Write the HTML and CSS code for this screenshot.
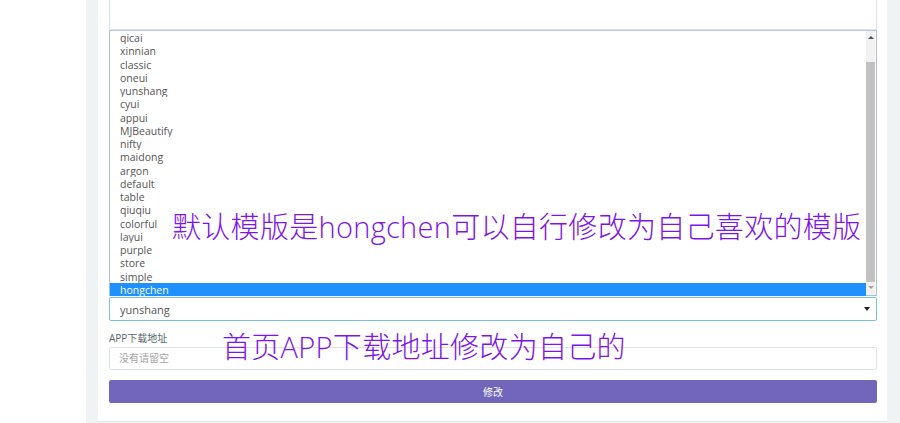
FILE: index.html
```html
<!DOCTYPE html>
<html lang="zh-CN">
<head>
    <meta charset="UTF-8">
    <meta name="viewport" content="width=device-width, initial-scale=1.0">
    <title>模版设置</title>
    <link rel="stylesheet" href="styles.css">
</head>
<body>
    <div class="app-content">
        <div class="panel">
            <div class="textarea"></div>

            <div class="listbox">
                <ul class="options">
                    <li>qicai</li>
                    <li>xinnian</li>
                    <li>classic</li>
                    <li>oneui</li>
                    <li>yunshang</li>
                    <li>cyui</li>
                    <li>appui</li>
                    <li>MJBeautify</li>
                    <li>nifty</li>
                    <li>maidong</li>
                    <li>argon</li>
                    <li>default</li>
                    <li>table</li>
                    <li>qiuqiu</li>
                    <li>colorful</li>
                    <li>layui</li>
                    <li>purple</li>
                    <li>store</li>
                    <li>simple</li>
                    <li class="selected">hongchen</li>
                </ul>
                <div class="scrollbar">
                    <span class="arrow up"></span>
                    <span class="thumb"></span>
                    <span class="arrow down"></span>
                </div>
            </div>

            <div class="select">
                <span>yunshang</span>
                <span class="caret"></span>
            </div>

            <label class="field-label">APP下载地址</label>
            <div class="input">没有请留空</div>

            <button class="btn-submit">修改</button>
        </div>
    </div>

    <!-- 标注文字 -->
    <div class="note note-template">默认模版是hongchen可以自行修改为自己喜欢的模版</div>
    <div class="note note-app">首页APP下载地址修改为自己的</div>
</body>
</html>
```

FILE: styles.css
```css
body {
    margin: 0;
    background: #fff;
    font-family: 'Open Sans', 'Noto Sans CJK SC', sans-serif;
    font-size: 11px;
    color: #58666e;
    height: 423px;
    overflow: hidden;
    position: relative;
}

.app-content {
    margin-left: 86px;
    background: #f0f3f4;
    padding: 0 13px 0 12px;
    height: 423px;
}

.panel {
    background: #fff;
    padding: 0 10px 0 11px;
    height: 421px;
    border-bottom: 1px solid #e4e8ea;
}

.textarea {
    height: 30px;
    border: 1px solid #dde2e6;
    border-top: none;
    box-sizing: border-box;
}

.listbox {
    display: flex;
    height: 266px;
    border: 1px solid #aebfdc;
    border-top-color: #b9c8e2;
    box-sizing: border-box;
    background: #fff;
}

.options {
    list-style: none;
    margin: 0;
    padding: 0;
    flex: 1;
}

.options li {
    height: 13.25px;
    line-height: 14.5px;
    padding-left: 10px;
    font-size: 10.5px;
    color: #555;
    white-space: nowrap;
    overflow: hidden;
}

.options li.selected {
    background: #1e90ff;
    color: #fff;
}

.scrollbar {
    width: 9px;
    margin-right: 1px;
    background: #f1f1f1;
    display: flex;
    flex-direction: column;
    align-items: center;
}

.arrow {
    height: 0;
    width: 0;
    border-left: 3px solid transparent;
    border-right: 3px solid transparent;
}

.arrow.up {
    margin: 5px 0 23px;
    border-bottom: 3px solid #505050;
}

.arrow.down {
    margin: 4px 0 0;
    border-top: 3px solid #a3a3a3;
}

.thumb {
    width: 9px;
    height: 220px;
    background: #c1c1c1;
}

.select {
    display: flex;
    align-items: center;
    justify-content: space-between;
    height: 24px;
    margin-top: 1px;
    padding: 0 6px 0 10px;
    border: 1px solid #75c2e6;
    border-radius: 2px;
    box-sizing: border-box;
    color: #555;
}

.caret {
    width: 0;
    height: 0;
    border-left: 3px solid transparent;
    border-right: 3px solid transparent;
    border-top: 4px solid #222;
}

.field-label {
    display: block;
    margin: 10px 0 2px;
    font-size: 10px;
    line-height: 14px;
    color: #58666e;
}

.input {
    height: 23px;
    line-height: 21px;
    padding-left: 9px;
    border: 1px solid #dfe3e6;
    border-radius: 2px;
    box-sizing: border-box;
    font-size: 10px;
    color: #a3a3a3;
}

.btn-submit {
    display: block;
    width: 100%;
    height: 23px;
    margin-top: 10px;
    background: #7266ba;
    border: none;
    border-radius: 2px;
    color: #fff;
    font-family: inherit;
    font-size: 10px;
    cursor: pointer;
}

.note {
    position: absolute;
    font-family: 'Open Sans', 'Noto Sans CJK SC', sans-serif;
    font-size: 29px;
    font-weight: 300;
    line-height: 29px;
    letter-spacing: 0.3px;
    color: #7d14ea;
    white-space: nowrap;
}

.note-template {
    left: 172px;
    top: 212px;
}

.note-app {
    left: 222px;
    top: 332px;
}
```
